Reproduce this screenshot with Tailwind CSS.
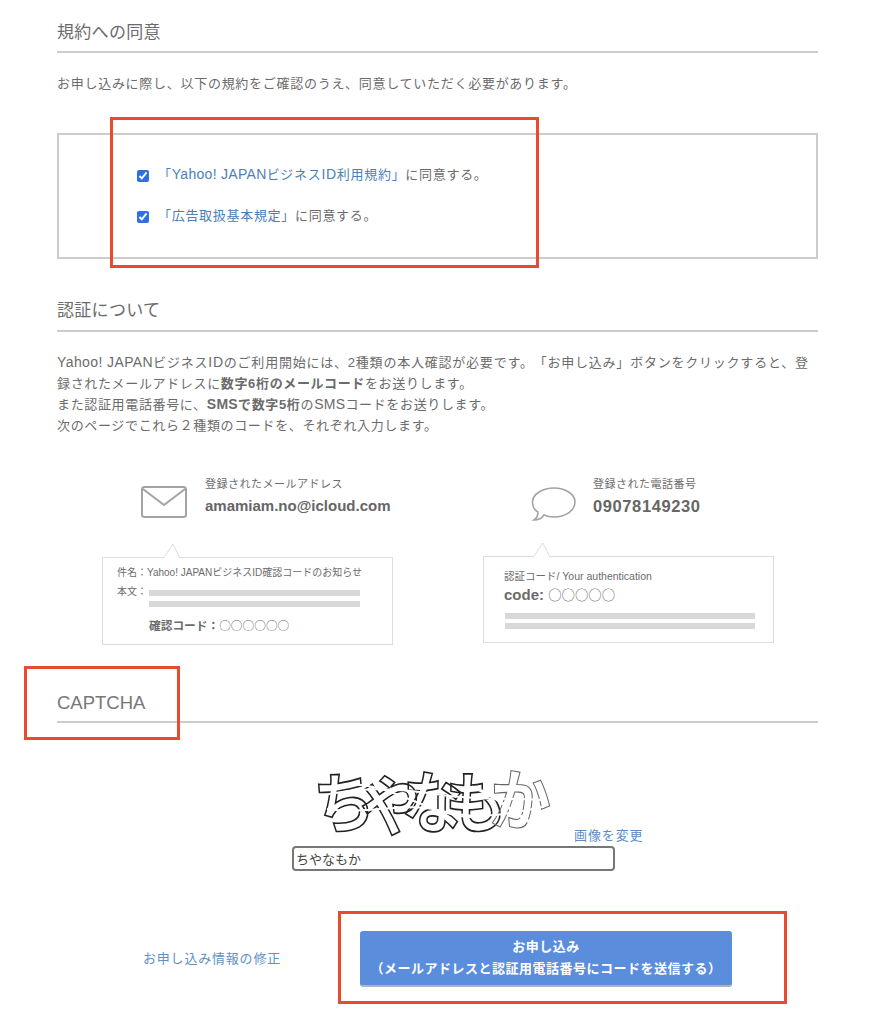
<!DOCTYPE html>
<html lang="ja">
<head>
    <meta charset="UTF-8">
    <meta name="viewport" content="width=device-width, initial-scale=1.0">
    <title>お申し込み</title>
    <script src="https://cdn.jsdelivr.net/npm/@tailwindcss/browser@4"></script>
</head>
<body class="relative h-[1024px] overflow-hidden bg-white text-[#6b6b6b] [text-spacing-trim:space-all] font-['Liberation_Sans','Noto_Sans_CJK_JP',sans-serif]">
    <main class="ml-[57px] w-[761px] pt-[21px]">
        <!-- Terms -->
        <h2 class="h-[32px] text-[17px] leading-[24px] tracking-[0.3px] border-b-2 border-[#ccc]">規約への同意</h2>
        <p class="mt-[21px] text-[13px] leading-[20px] tracking-[0.72px]">お申し込みに際し、以下の規約をご確認のうえ、同意していただく必要があります。</p>
        <div class="mt-[39px] h-[126px] border-2 border-[#ccc] pl-[78px] pt-[30px] text-[13px] leading-[20px] tracking-[0.7px]">
            <label class="flex items-center h-[20px]">
                <input type="checkbox" checked class="w-[12px] h-[12px] mt-[2px] mr-[9px] accent-[#2f6fe4]">
                <span class="-mt-[2px]"><a class="text-[#4a7fb8]">「<span class="text-[14px] tracking-[0.3px]">Yahoo! JAPAN</span>ビジネス<span class="text-[14px]">ID</span>利用規約」</a>に同意する。</span>
            </label>
            <label class="flex items-center h-[20px] mt-[21px]">
                <input type="checkbox" checked class="w-[12px] h-[12px] mt-[2px] mr-[9px] accent-[#2f6fe4]">
                <span><a class="text-[#4a7fb8]">「広告取扱基本規定」</a>に同意する。</span>
            </label>
        </div>

        <!-- Verification -->
        <h2 class="mt-[40px] h-[33px] text-[17px] leading-[24px] tracking-[0.3px] border-b-2 border-[#ccc]">認証について</h2>
        <p class="mt-[19.5px] text-[13px] leading-[21.3px] tracking-[0.65px] whitespace-nowrap"><span class="tracking-[0.78px]"><span class="text-[14px] tracking-[0.4px]">Yahoo! JAPAN</span>ビジネス<span class="text-[14px]">ID</span>のご利用開始には、2種類の本人確認が必要です。「お申し込み」ボタンをクリックすると、登</span><br>録されたメールアドレスに<b>数字6桁のメールコード</b>をお送りします。<br>また認証用電話番号に、<b><span class="text-[14px] tracking-[0.3px]">SMS</span>で数字5桁</b>の<span class="text-[14px] tracking-[0.3px]">SMS</span>コードをお送りします。<br>次のページでこれら２種類のコードを、それぞれ入力します。</p>

        <div class="mt-[36.5px] flex">
            <!-- Email -->
            <div class="w-[381px] pl-[45px]">
                <div class="flex h-[44px] pl-[39px]">
                    <svg class="mt-[13px] w-[46px] h-[33px] text-[#a3a3a3]" viewBox="0 0 46 33" fill="none" stroke="currentColor" stroke-width="2">
                        <rect x="1" y="1" width="44" height="30" rx="2.5"/>
                        <path d="M2 3 L23 19 L44 3"/>
                    </svg>
                    <div class="ml-[18px]">
                        <div class="text-[11px] leading-[16px] tracking-[0.5px] mt-[3px]">登録されたメールアドレス</div>
                        <div class="text-[15px] leading-[22px] font-bold text-[#666] mt-[3px]">amamiam.no@icloud.com</div>
                    </div>
                </div>
                <div class="relative mt-[40px] w-[291px] h-[88px] border border-[#ddd] pl-[14px] pt-[8px]">
                    <svg class="absolute left-[58px] top-[-15px] w-[22px] h-[16px]" viewBox="0 0 22 16" fill="none">
                        <path d="M1 15.5 L11 1 L18 15.5" transform="translate(1 0)" fill="#fff" stroke="#ddd"/>
                    </svg>
                    <div class="text-[10px] leading-[14px] whitespace-nowrap">件名：Yahoo! JAPANビジネスID確認コードのお知らせ</div>
                    <div class="flex mt-[5px]">
                        <div class="w-[32px] text-[10px] leading-[14px] whitespace-nowrap">本文：</div>
                        <div class="w-[211px] pt-[5px]">
                            <div class="h-[6px] bg-[#d8d8d8]"></div>
                            <div class="h-[6px] bg-[#d8d8d8] mt-[5px]"></div>
                        </div>
                    </div>
                    <div class="ml-[32px] mt-[10px] text-[11.7px] leading-[16px] whitespace-nowrap"><b>確認コード：</b><span class="font-['Noto_Sans_CJK_JP',sans-serif]">○○○○○○</span></div>
                </div>
            </div>
            <!-- Phone -->
            <div class="w-[380px] pl-[44px]">
                <div class="flex h-[44px] pl-[49px]">
                    <svg class="mt-[13px] w-[46px] h-[36px] text-[#a3a3a3]" viewBox="0 0 46 36" fill="none" stroke="currentColor" stroke-width="1.6">
                        <path d="M23 2 C34 2 44 8 44 16 C44 25 34 31 23 31 C19 31 15 30 13 29 C11 32 7 34 3 34 C6 32 7 29 7 26 C3 24 1.5 20 1.5 16 C1.5 8 12 2 23 2 Z"/>
                    </svg>
                    <div class="ml-[16px]">
                        <div class="text-[11px] leading-[16px] tracking-[0.5px] mt-[3px]">登録された電話番号</div>
                        <div class="text-[16.5px] leading-[22px] font-bold text-[#666] tracking-[0.6px] mt-[3px]">09078149230</div>
                    </div>
                </div>
                <div class="relative mt-[39px] ml-[1px] w-[291px] h-[87px] border border-[#ddd] pl-[20px] pt-[12px]">
                    <svg class="absolute left-[47px] top-[-15px] w-[22px] h-[16px]" viewBox="0 0 22 16" fill="none">
                        <path d="M1 15.5 L11 1 L18 15.5" transform="translate(1 0)" fill="#fff" stroke="#ddd"/>
                    </svg>
                    <div class="text-[10.5px] leading-[14px]">認証コード/ Your authentication</div>
                    <div class="mt-[2px] text-[15px] leading-[18px] whitespace-nowrap"><b>code:</b> <span class="text-[13.4px] font-['Noto_Sans_CJK_JP',sans-serif]">○○○○○</span></div>
                    <div class="mt-[9px] ml-[1px] w-[250px] h-[6px] bg-[#d8d8d8]"></div>
                    <div class="mt-[4px] ml-[1px] w-[250px] h-[6px] bg-[#d8d8d8]"></div>
                </div>
            </div>
        </div>

        <!-- Captcha -->
        <h2 class="mt-[46px] h-[32px] text-[18.5px] leading-[24px] text-[#777] border-b-2 border-[#ccc]">CAPTCHA</h2>
        <div class="relative mt-[44px] ml-[235px] w-[326px] h-[79px]">
            <div class="flex items-start h-[70px] pl-[22px] origin-top scale-y-110 text-[61px] leading-[68px] font-bold text-transparent [-webkit-text-stroke:1.5px_#222]">
                <span class="inline-block -mr-[14px] rotate-[-5deg]">ち</span>
                <span class="inline-block -mr-[20px] mt-[3px] rotate-[-10deg]">や</span>
                <span class="inline-block -mr-[18px] rotate-[3deg]">な</span>
                <span class="inline-block -mr-[16px] rotate-[-3deg]">も</span>
                <span class="inline-block mt-[-2px] rotate-[4deg] [-webkit-text-stroke:1px_#666]">か</span>
            </div>
            <!-- white noise lines across the captcha letters -->
            <svg class="absolute left-[20px] top-0 w-[240px] h-[70px]" viewBox="0 0 240 70" fill="none" stroke="#fff" stroke-width="2">
                <path d="M5 30 C50 18 90 22 130 28 S210 30 235 34"/>
                <path d="M15 42 C60 48 90 34 130 44 S200 46 230 40"/>
                <path d="M30 18 C80 12 120 54 170 50"/>
                <path d="M160 20 C190 30 215 60 235 62" stroke-width="3"/>
            </svg>
            <a class="absolute left-[282px] top-[59px] text-[13px] leading-[20px] tracking-[0.9px] whitespace-nowrap text-[#5d8cc4]">画像を変更</a>
        </div>
        <input type="text" value="ちやなもか" class="block ml-[235px] w-[323px] h-[25px] border-2 border-[#777] rounded-[4px] px-[2px] text-[13px] text-[#444]">

        <div class="mt-[60px] flex items-center">
            <a class="ml-[86px] w-[217px] text-[13px] tracking-[0.8px] whitespace-nowrap text-[#6190c4]">お申し込み情報の修正</a>
            <button class="w-[372px] h-[56px] rounded-[3px] bg-[#5b8ddd] border-b-2 border-[#a9b4c6] text-white text-[13px] tracking-[0.5px] font-bold leading-[22px]">お申し込み<br>（メールアドレスと認証用電話番号にコードを送信する）</button>
        </div>
    </main>

    <!-- Annotation frames drawn over the page -->
    <div class="absolute left-[110px] top-[117px] w-[429px] h-[151px] border-[3px] border-[#ea4a2e]"></div>
    <div class="absolute left-[24px] top-[666px] w-[156px] h-[74px] border-[3px] border-[#ea4a2e]"></div>
    <div class="absolute left-[338px] top-[911px] w-[449px] h-[93px] border-[3px] border-[#ea4a2e]"></div>
</body>
</html>
